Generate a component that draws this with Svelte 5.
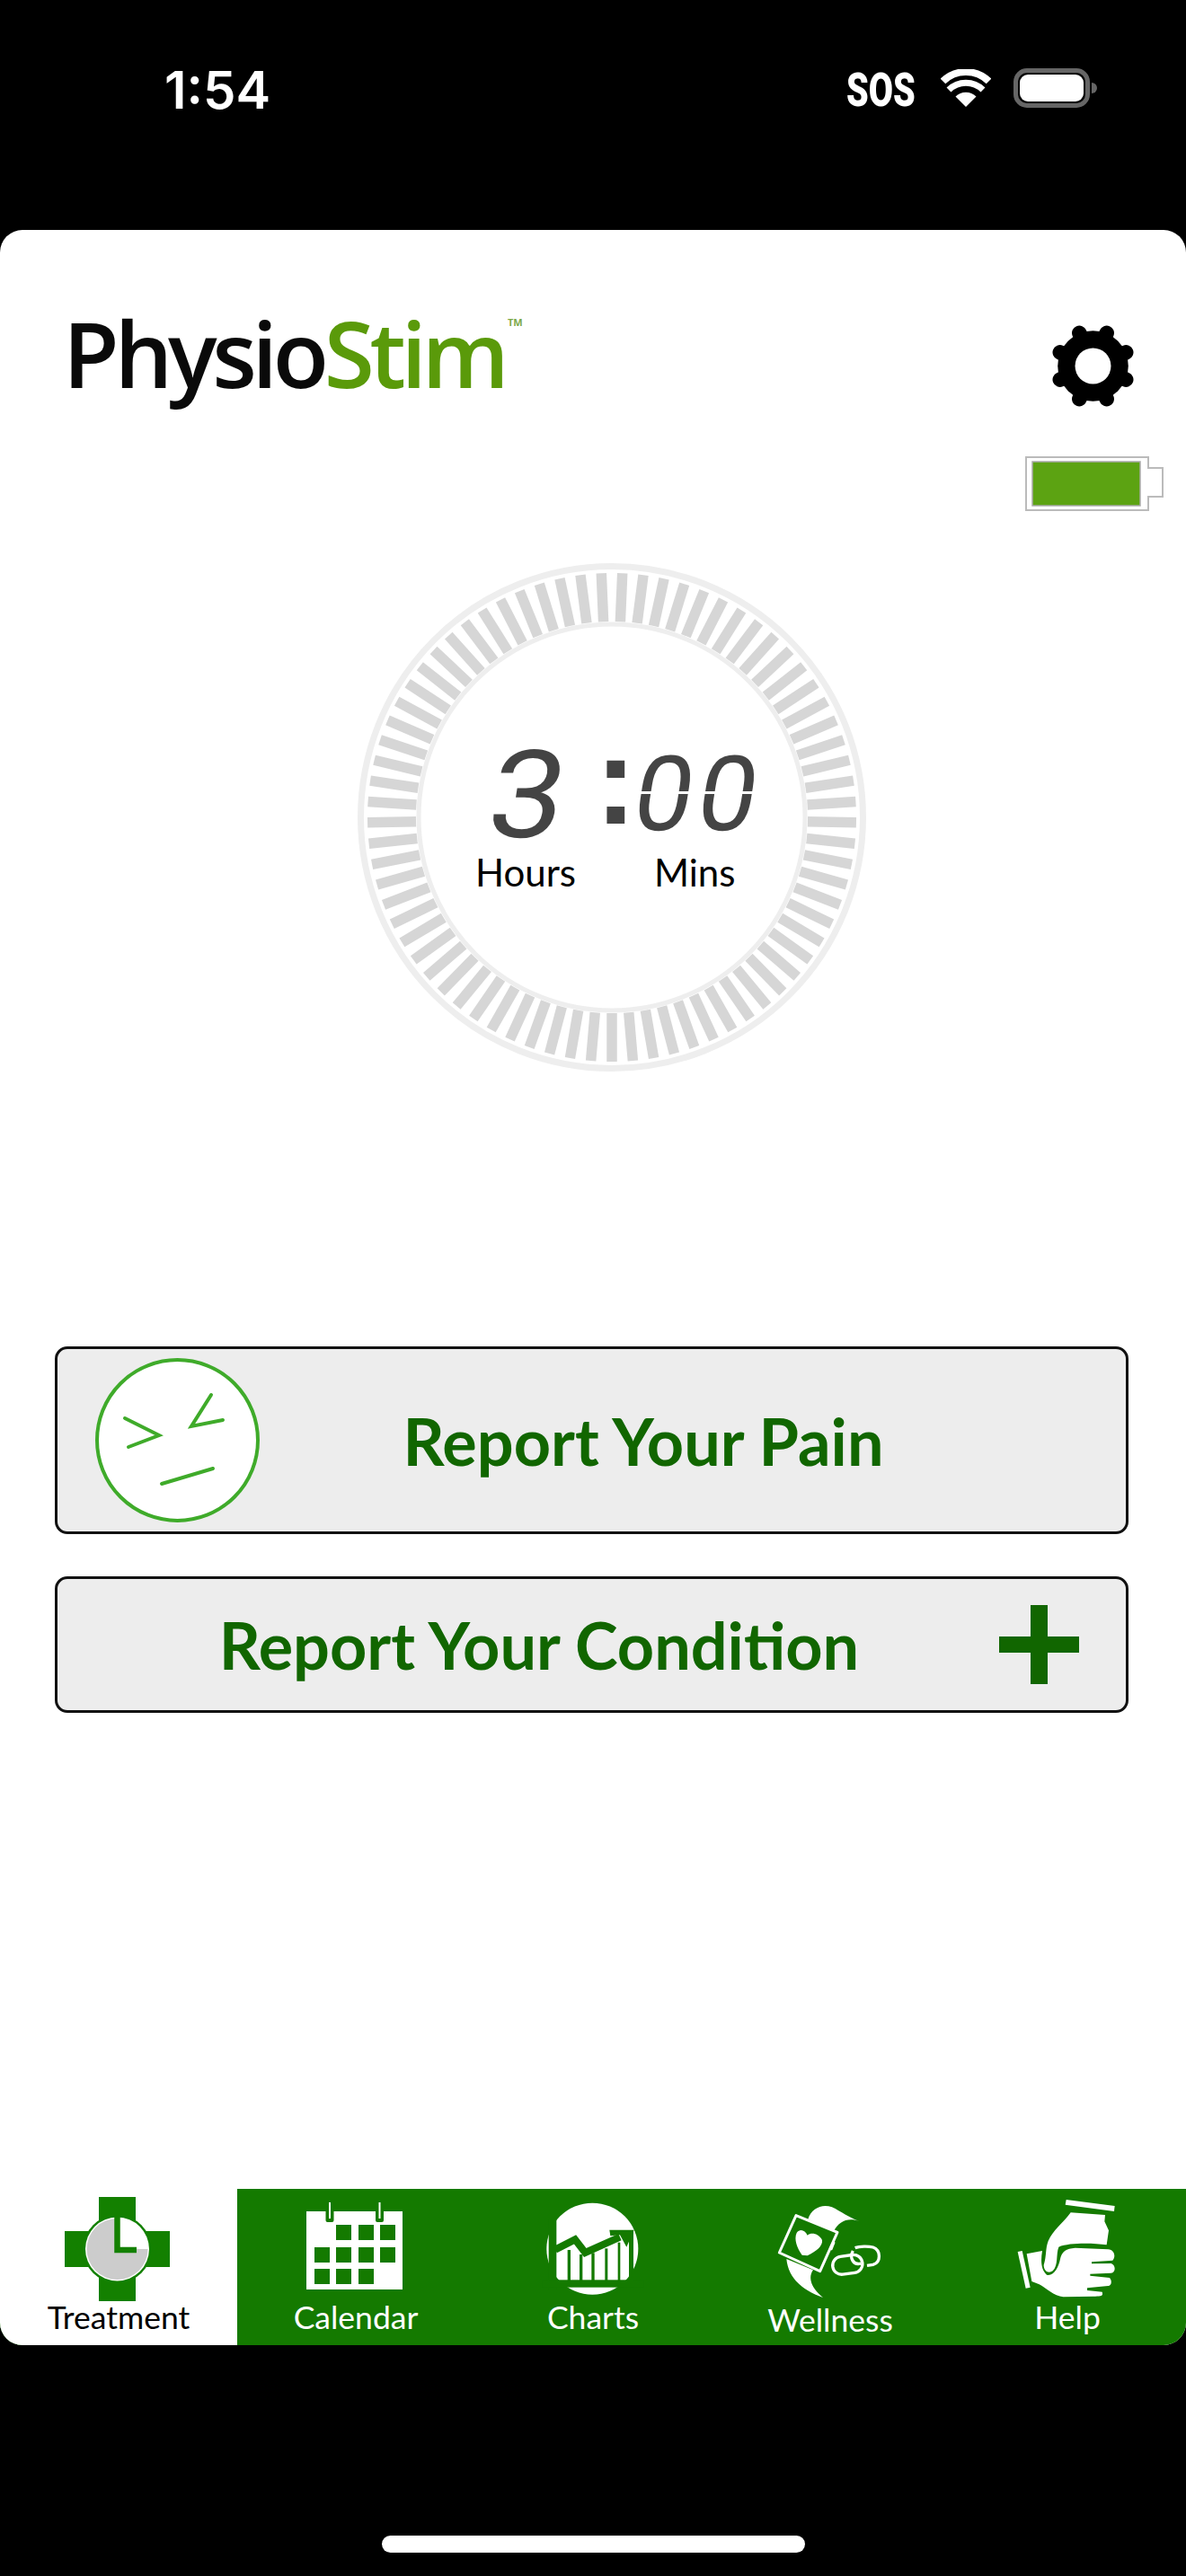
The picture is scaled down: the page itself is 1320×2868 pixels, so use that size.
<script>
  const ticks = Array.from({ length: 73 }, (_, i) => (i * 360) / 73);
  const teeth = Array.from({ length: 8 }, (_, i) => 22.5 + i * 45);
  const grid = [
    [0, 1, 1, 1],
    [1, 1, 1, 1],
    [1, 1, 1, 0]
  ];
  const cols = [350, 374, 399, 423];
  const rows = [2477, 2502, 2526];
</script>

<div class="screen">
  <header class="status">
    <span class="clock">1:54</span>
    <div class="status-right">
      <span class="sos">SOS</span>
      <svg class="wifi" viewBox="1047 77 56 42" aria-hidden="true">
        <path d="M1075 119 L1063.5 107.5 A16.3 16.3 0 0 1 1086.5 107.5 Z" fill="#fff" />
        <path d="M1056 100 A27 27 0 0 1 1094 100" fill="none" stroke="#fff" stroke-width="7" />
        <path d="M1049.5 90.5 A36.5 36.5 0 0 1 1100.5 90.5" fill="none" stroke="#fff" stroke-width="8" />
      </svg>
      <div class="phone-batt"><span class="phone-batt-fill"></span></div>
      <span class="phone-batt-nub"></span>
    </div>
  </header>

  <main class="card">
    <section class="head">
      <div class="logo"><span class="logo-dark">Physio</span><span class="logo-green">Stim</span><span class="tm">TM</span></div>
      <div class="head-right">
        <svg class="gear" viewBox="-50 -50 100 100" aria-label="Settings" role="img">
          <mask id="gearhole">
            <rect x="-50" y="-50" width="100" height="100" fill="#fff" />
            <circle r="20.6" fill="#000" />
          </mask>
          <g mask="url(#gearhole)" fill="#000">
            <circle r="40.5" />
            {#each teeth as a}
              <line x1="0" y1="-30" x2="0" y2="-41" stroke="#000" stroke-width="17" stroke-linecap="round" transform="rotate({a})" />
            {/each}
          </g>
        </svg>
        <svg class="device-batt" viewBox="0 0 155 61" aria-label="Battery" role="img">
          <path d="M1 1 H137 V13 H153 V45 H137 V60 H1 Z" fill="#fff" stroke="#bbb" stroke-width="2" />
          <rect x="8" y="6" width="120" height="49" fill="#5ca312" stroke="#aaa" stroke-width="1.5" />
        </svg>
      </div>
    </section>

    <section class="dial">
      <svg class="dial-art" viewBox="-284 -284 568 568" aria-hidden="true">
        <circle r="279.5" fill="none" stroke="#eeeeee" stroke-width="7" />
        <circle r="215" fill="none" stroke="#eeeeee" stroke-width="5" />
        {#each ticks as a}
          <line x1="0" y1="218" x2="0" y2="272" stroke="#d6d6d6" stroke-width="11.5" transform="rotate({a})" />
        {/each}
      </svg>
      <div class="readout">
        <div class="digits">
          <span class="hour">3</span>
          <span class="colon">:</span>
          <span class="mins">00</span>
        </div>
        <div class="units">
          <span class="hours-label">Hours</span>
          <span class="mins-label">Mins</span>
        </div>
      </div>
    </section>

    <section class="actions">
      <button class="action pain">
        <svg class="face" viewBox="0 0 187 187" aria-hidden="true">
          <circle cx="93.5" cy="93.5" r="89.5" fill="#fff" stroke="#3fab2a" stroke-width="4" />
          <g fill="none" stroke="#3fab2a" stroke-width="4" stroke-linecap="round">
            <path d="M35 69 L73 88 L39 101" />
            <path d="M131 43 L109 78 L144 71" />
            <path d="M76 142 L133 125" />
          </g>
        </svg>
        <span class="action-text">Report Your Pain</span>
      </button>
      <button class="action condition">
        <span class="action-text">Report Your Condition</span>
        <svg class="plus" viewBox="0 0 89 88" aria-hidden="true">
          <rect x="35" y="0" width="19" height="88" fill="#116600" />
          <rect x="0" y="35" width="89" height="18" fill="#116600" />
        </svg>
      </button>
    </section>

    <nav class="tabs">
      <div class="tab active">
        <svg class="tab-icon" viewBox="72 2443 120 122" aria-hidden="true">
          <rect x="110" y="2446" width="41" height="116" fill="#138000" />
          <rect x="72" y="2484" width="117" height="40" fill="#138000" />
          <ellipse cx="130.5" cy="2504" rx="38" ry="38" fill="#138000" />
          <circle cx="130.5" cy="2504" r="35.5" fill="#fff" />
          <path d="M130.5 2504 L164.5 2504 A34 34 0 1 1 130.5 2470 Z" fill="#cccccc" />
          <path d="M130.5 2468 V2505 H152" fill="none" stroke="#138000" stroke-width="6.5" />
        </svg>
        <span class="tab-label">Treatment</span>
      </div>
      <div class="tab">
        <svg class="tab-icon" viewBox="336 2443 120 122" aria-hidden="true">
          <rect x="341" y="2462" width="107" height="87" fill="#fff" />
          <rect x="362.5" y="2456" width="9" height="18" rx="2" fill="#147a00" />
          <rect x="418" y="2456" width="9" height="18" rx="2" fill="#147a00" />
          <rect x="366" y="2452" width="2" height="18" fill="#fff" />
          <rect x="421.5" y="2452" width="2" height="18" fill="#fff" />
          {#each rows as y, r}
            {#each cols as x, c}
              {#if grid[r][c]}
                <rect {x} {y} width="17" height="17" fill="#147a00" />
              {/if}
            {/each}
          {/each}
        </svg>
        <span class="tab-label">Calendar</span>
      </div>
      <div class="tab">
        <svg class="tab-icon" viewBox="30 9 360 366" aria-hidden="true">
          <circle cx="208" cy="191" r="153" fill="#fff" />
          <rect x="62" y="90" width="26" height="240" fill="#147a00" />
          <rect x="40" y="295" width="340" height="25" fill="#147a00" />
          <rect x="330" y="130" width="15" height="170" fill="#147a00" />
          <g fill="#147a00">
            <rect x="125" y="195" width="10" height="105" />
            <rect x="165" y="210" width="10" height="90" />
            <rect x="205" y="205" width="10" height="95" />
            <rect x="250" y="190" width="9" height="110" />
            <rect x="293" y="170" width="8" height="130" />
          </g>
          <path d="M84 194 L150 160 L184 204 L300 152" fill="none" stroke="#147a00" stroke-width="24" />
          <path d="M265 128 H347 L322 185 L300 145 L268 148 Z" fill="#147a00" />
        </svg>
        <span class="tab-label">Charts</span>
      </div>
      <div class="tab">
        <svg class="tab-icon" viewBox="42 9 360 366" aria-hidden="true">
          <g fill="#fff">
            <path d="M148 92 C160 55 195 40 228 52 C258 66 285 88 320 99 C280 85 250 100 234 132 Z" />
            <path d="M76 225 C82 290 130 330 198 354 C160 322 146 290 165 262 Z" />
          </g>
          <path d="M108 80 L246 136 L188 266 L52 204 Z" fill="#147a00" stroke="#fff" stroke-width="9" stroke-linejoin="round" />
          <rect x="224" y="166" width="10" height="30" rx="3" transform="rotate(22 229 181)" fill="#fff" />
          <path d="M146 214 L128 212 C112 190 100 160 110 138 C122 122 138 130 146 146 C160 134 186 142 195 162 C198 182 175 200 146 214 Z" fill="#fff" />
          <g fill="none" stroke="#fff" stroke-width="10">
            <rect x="230" y="214" width="100" height="60" rx="30" transform="rotate(-8 280 244)" />
            <path d="M305 188 C320 182 350 182 365 186 C392 196 392 236 365 244 L345 247" />
            <path d="M298 198 C285 222 300 248 325 240" />
          </g>
        </svg>
        <span class="tab-label wellness">Wellness</span>
      </div>
      <div class="tab">
        <svg class="tab-icon" viewBox="834 9 360 366" aria-hidden="true">
          <g fill="#fff">
            <path d="M1010 27 L1172 48 L1170 66 L1007 44 Z" />
            <path d="M1025 70 L1140 78 L1138 100 L1152 130 L1145 178 C1100 172 1020 170 985 185 C975 210 985 245 965 265 C950 275 935 265 935 245 C945 215 940 190 950 165 C965 130 1000 105 1025 70 Z" />
            <path d="M848 201 L863 198 L890 320 L875 323 Z" />
            <path d="M878 208 L930 198 C925 230 925 260 945 278 C965 285 985 255 990 225 C995 200 1010 190 1040 188 L1150 193 C1172 195 1176 218 1165 230 L1095 235 L1095 241 L1160 240 C1176 245 1176 270 1160 272 L1090 275 L1090 281 L1155 288 C1165 300 1160 315 1150 315 L1080 322 L1080 330 L1130 335 C1135 350 1125 350 1100 350 L1000 352 C970 350 940 320 920 310 L895 300 Z" />
          </g>
        </svg>
        <span class="tab-label">Help</span>
      </div>
    </nav>
  </main>

  <div class="home-indicator"></div>
</div>

<style>
  :global(body) {
    margin: 0;
    background: #000;
  }

  .screen {
    width: 1320px;
    height: 2868px;
    background: #000;
    display: flex;
    flex-direction: column;
    overflow: hidden;
    font-family: Lato, "Open Sans", sans-serif;
  }

  .status {
    height: 256px;
    flex: none;
    box-sizing: border-box;
    padding: 70px 0 0 183px;
    display: flex;
    justify-content: space-between;
    align-items: flex-start;
    color: #fff;
  }

  .clock {
    font-family: Inter, sans-serif;
    font-weight: 600;
    font-size: 58px;
    line-height: 60px;
  }

  .status-right {
    display: flex;
    align-items: flex-start;
    margin-right: 99px;
  }

  .sos {
    font-family: Roboto, sans-serif;
    font-weight: 900;
    font-size: 52px;
    line-height: 60px;
    width: 75px;
    transform: scaleX(0.76);
    transform-origin: left center;
    white-space: nowrap;
    margin-top: 1px;
  }

  .wifi {
    width: 56px;
    height: 42px;
    margin: 7px 0 0 30px;
  }

  .phone-batt {
    width: 85px;
    height: 44px;
    box-sizing: border-box;
    border: 5px solid #666;
    border-radius: 15px;
    padding: 2px;
    margin: 6px 0 0 25px;
  }

  .phone-batt-fill {
    display: block;
    height: 100%;
    background: #fff;
    border-radius: 9px;
  }

  .phone-batt-nub {
    width: 6px;
    height: 12px;
    background: #666;
    border-radius: 0 6px 6px 0;
    margin: 22px 0 0 2px;
  }

  .card {
    height: 2355px;
    flex: none;
    background: #fff;
    border-radius: 25px;
    overflow: hidden;
    display: flex;
    flex-direction: column;
  }

  .head {
    height: 370px;
    flex: none;
    display: flex;
    justify-content: space-between;
    align-items: flex-start;
  }

  .logo {
    position: relative;
    margin: 67px 0 0 70px;
    font-family: "Open Sans", sans-serif;
    font-weight: 600;
    font-size: 102px;
    line-height: 140px;
    letter-spacing: -5.3px;
    white-space: nowrap;
  }

  .logo-dark {
    color: #0a0a0a;
  }

  .logo-green {
    color: #5a9a0a;
  }

  .tm {
    position: absolute;
    right: -20px;
    top: 30px;
    font-size: 11px;
    line-height: 12px;
    letter-spacing: 0;
    font-weight: 700;
    color: #7ba94a;
  }

  .head-right {
    display: flex;
    flex-direction: column;
    align-items: flex-end;
    padding: 103px 24px 0 0;
  }

  .gear {
    width: 97px;
    height: 97px;
    margin: 0 31.5px 0 0;
  }

  .device-batt {
    width: 155px;
    height: 61px;
    margin-top: 52px;
  }

  .dial {
    position: relative;
    width: 568px;
    height: 568px;
    flex: none;
    margin-left: 397px;
  }

  .dial-art {
    display: block;
    width: 568px;
    height: 568px;
  }

  .readout {
    position: absolute;
    inset: 0;
  }

  .digits {
    display: flex;
    align-items: flex-start;
    height: 122px;
    padding: 198px 0 0 153px;
    color: #444;
    font-family: Roboto, sans-serif;
    font-weight: 400;
  }

  .hour {
    font-size: 136px;
    line-height: 120px;
    width: 85px;
    margin-top: 2px;
    transform: skewX(-9deg) scaleX(1.1);
  }

  .colon {
    font-family: "Liberation Sans", sans-serif;
    font-weight: 700;
    font-size: 140px;
    line-height: 120px;
    width: 45px;
    margin: -15px 0 0 27px;
  }

  .mins {
    position: relative;
    font-size: 116px;
    line-height: 120px;
    letter-spacing: 6px;
    transform: skewX(-9deg);
  }

  .mins::after {
    content: "";
    position: absolute;
    left: 0;
    right: 0;
    top: 57px;
    height: 3px;
    background: #fff;
  }

  .units {
    display: flex;
    color: #000;
    font-size: 42px;
    line-height: 50px;
    padding: 0 0 0 132px;
  }

  .hours-label {
    width: 199px;
  }

  .actions {
    margin: 305px 64px 0 61px;
    display: flex;
    flex-direction: column;
    gap: 47px;
  }

  .action {
    display: flex;
    align-items: center;
    box-sizing: border-box;
    width: 100%;
    padding: 0;
    background: #ededed;
    border: 3px solid #111;
    border-radius: 14px;
    font: inherit;
    color: #116600;
  }

  .action-text {
    flex: 1;
    text-align: center;
    font-weight: 700;
    font-size: 72px;
    line-height: 80px;
  }

  .pain {
    height: 209px;
    padding: 0 112px 0 40px;
  }

  .face {
    width: 187px;
    height: 187px;
    flex: none;
  }

  .condition {
    height: 152px;
    padding: 0 52px 0 24px;
  }

  .plus {
    width: 89px;
    height: 88px;
    flex: none;
  }

  .tabs {
    margin-top: auto;
    height: 174px;
    flex: none;
    display: grid;
    grid-template-columns: repeat(5, 264px);
    background: #147a00;
  }

  .tab {
    display: flex;
    flex-direction: column;
    align-items: center;
    padding-top: 6px;
    color: #fff;
    font-size: 35.5px;
  }

  .active {
    background: #fff;
    color: #000;
  }

  .tab-icon {
    width: 120px;
    height: 122px;
    flex: none;
  }

  .tab-label {
    line-height: 36px;
    margin-top: -3px;
  }

  .wellness {
    margin-top: 0;
  }

  .home-indicator {
    width: 471px;
    height: 19px;
    margin: 212px 0 0 425px;
    background: #fff;
    border-radius: 10px;
    flex: none;
  }
</style>
